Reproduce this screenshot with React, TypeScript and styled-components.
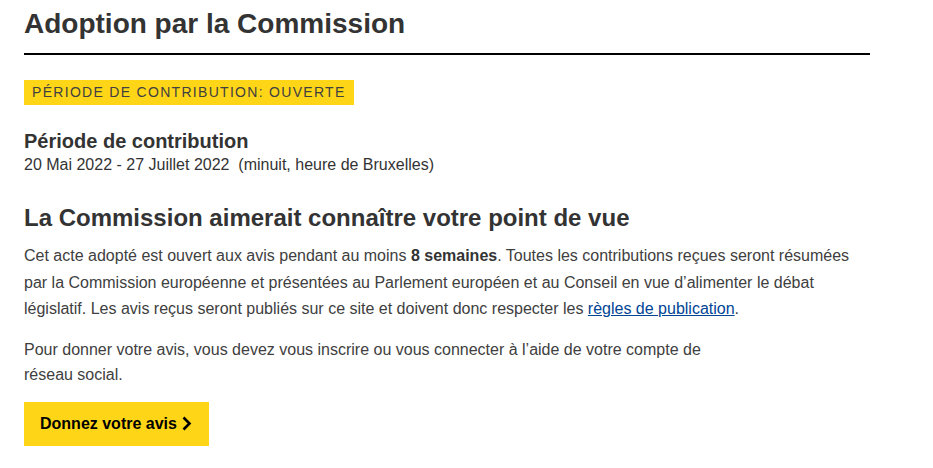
import React from "react";
import styled, { createGlobalStyle } from "styled-components";

const Global = createGlobalStyle`
  html, body { margin: 0; padding: 0; background: #fff; }
  body { font-family: Arial, "Liberation Sans", sans-serif; color: #404040; }
`;

const Page = styled.main`
  width: 846px;
  padding: 0 24px;
  display: flex;
  flex-direction: column;
  align-items: flex-start;
`;

const Title = styled.h1`
  align-self: stretch;
  margin: 0;
  padding: 8px 0 13px;
  font-size: 28px;
  line-height: 32px;
  font-weight: 700;
  color: #333;
  border-bottom: 2px solid #000;
`;

const Badge = styled.div`
  margin-top: 25px;
  background: #ffd617;
  color: #404040;
  font-size: 14px;
  line-height: 25px;
  letter-spacing: 1.3px;
  padding: 0 8px;
  text-transform: uppercase;
`;

const Sub = styled.h2`
  margin: 24px 0 0;
  font-size: 20px;
  line-height: 24px;
  font-weight: 700;
  color: #333;
`;

const Dates = styled.div`
  margin-top: 2px;
  font-size: 16px;
  line-height: 20px;
  color: #333;
  white-space: pre;
`;

const Heading = styled.h2`
  margin: 28px 0 0;
  font-size: 24px;
  line-height: 30px;
  font-weight: 700;
  color: #333;
`;

const Para = styled.p<{ $narrow?: boolean }>`
  margin: ${(p) => (p.$narrow ? "14px" : "10px")} 0 0;
  font-size: 16px;
  line-height: ${(p) => (p.$narrow ? "25px" : "26.5px")};
  color: #404040;
  max-width: ${(p) => (p.$narrow ? "720px" : "none")};
  b { color: #333; }
`;

const Link = styled.a`
  color: #004494;
  text-decoration: underline;
`;

const Button = styled.a`
  margin-top: 15px;
  display: inline-flex;
  align-items: center;
  gap: 4px;
  height: 44px;
  padding: 0 17px 0 16px;
  background: #ffd617;
  color: #000;
  font-size: 16px;
  font-weight: 700;
  text-decoration: none;
`;

const Chevron = () => (
  <svg width="11" height="15" viewBox="0 0 11 15" aria-hidden="true">
    <path d="M2.5 1.5 L8.5 7.5 L2.5 13.5" fill="none" stroke="#000" strokeWidth="2.6" />
  </svg>
);

export default function App() {
  return (
    <Page>
      <Global />
      <Title>Adoption par la Commission</Title>
      <Badge>Période de contribution: ouverte</Badge>
      <Sub>Période de contribution</Sub>
      <Dates>20 Mai 2022 - 27 Juillet 2022  (minuit, heure de Bruxelles)</Dates>
      <Heading>La Commission aimerait connaître votre point de vue</Heading>
      <Para>
        Cet acte adopté est ouvert aux avis pendant au moins <b>8 semaines</b>. Toutes les
        contributions reçues seront résumées par la Commission européenne et présentées au
        Parlement européen et au Conseil en vue d’alimenter le débat législatif. Les avis reçus
        seront publiés sur ce site et doivent donc respecter les{" "}
        <Link href="#">règles de publication</Link>.
      </Para>
      <Para $narrow>
        Pour donner votre avis, vous devez vous inscrire ou vous connecter à l’aide de votre
        compte de réseau social.
      </Para>
      <Button href="#">
        Donnez votre avis <Chevron />
      </Button>
    </Page>
  );
}
